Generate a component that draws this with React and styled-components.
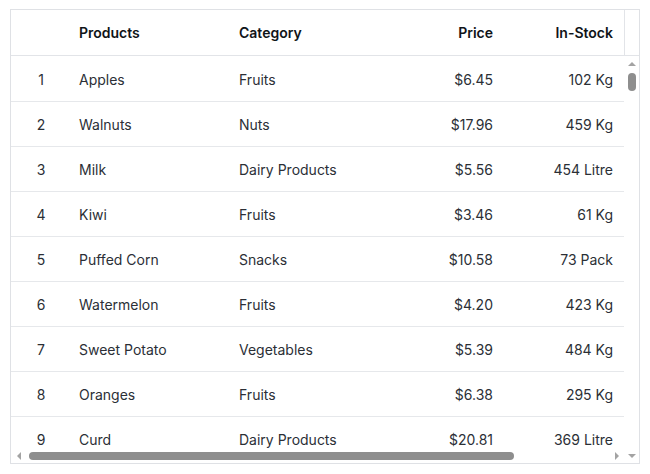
import React from 'react';
import styled, { createGlobalStyle } from 'styled-components';

const GlobalStyle = createGlobalStyle`
    * {
        box-sizing: border-box;
    }
    body {
        margin: 0;
        padding: 9px 10px;
        background: #ffffff;
        font-family: Inter, "Noto Sans", sans-serif;
    }
`;

// column layout shared by header and rows
const columns = [
    { key: 'id', title: '', width: 60, align: 'center' },
    { key: 'name', title: 'Products', width: 160, align: 'left' },
    { key: 'category', title: 'Category', width: 160, align: 'left' },
    { key: 'price', title: 'Price', width: 110, align: 'right' },
    { key: 'stock', title: 'In-Stock', width: 120, align: 'right' },
];

const products = [
    { id: 1, name: 'Apples', category: 'Fruits', price: '$6.45', stock: '102 Kg' },
    { id: 2, name: 'Walnuts', category: 'Nuts', price: '$17.96', stock: '459 Kg' },
    { id: 3, name: 'Milk', category: 'Dairy Products', price: '$5.56', stock: '454 Litre' },
    { id: 4, name: 'Kiwi', category: 'Fruits', price: '$3.46', stock: '61 Kg' },
    { id: 5, name: 'Puffed Corn', category: 'Snacks', price: '$10.58', stock: '73 Pack' },
    { id: 6, name: 'Watermelon', category: 'Fruits', price: '$4.20', stock: '423 Kg' },
    { id: 7, name: 'Sweet Potato', category: 'Vegetables', price: '$5.39', stock: '484 Kg' },
    { id: 8, name: 'Oranges', category: 'Fruits', price: '$6.38', stock: '295 Kg' },
    { id: 9, name: 'Curd', category: 'Dairy Products', price: '$20.81', stock: '369 Litre' },
];

// small triangles drawn like the browser's scrollbar buttons
const arrowPoints = {
    up: '0,4 4,0 8,4',
    down: '0,0 8,0 4,4',
    left: '4,0 4,8 0,4',
    right: '0,0 0,8 4,4',
};

const Arrow = ({ dir }) => {
    const vertical = dir === 'up' || dir === 'down';
    return (
        <ArrowBox vertical={vertical}>
            <svg width={vertical ? 8 : 4} height={vertical ? 4 : 8}>
                <polygon points={arrowPoints[dir]} fill="#a3a3a3" />
            </svg>
        </ArrowBox>
    );
};

const ScrollBar = ({ vertical, thumb }) => (
    <Bar vertical={vertical}>
        <Arrow dir={vertical ? 'up' : 'left'} />
        <Track vertical={vertical}>
            <Thumb vertical={vertical} size={thumb} />
        </Track>
        <Arrow dir={vertical ? 'down' : 'right'} />
    </Bar>
);

const App = () => {
    return (
        <>
            <GlobalStyle />
            <Grid>
                <HeaderRow>
                    <HeaderCells>
                        {columns.map((col) => (
                            <HeaderCell key={col.key} width={col.width} align={col.align}>
                                {col.title}
                            </HeaderCell>
                        ))}
                    </HeaderCells>
                    <HeaderFiller />
                </HeaderRow>
                <Body>
                    <Main>
                        <RowsViewport>
                            {products.map((p) => (
                                <Row key={p.id}>
                                    {columns.map((col) => (
                                        <Cell key={col.key} width={col.width} align={col.align}>
                                            {p[col.key]}
                                        </Cell>
                                    ))}
                                </Row>
                            ))}
                        </RowsViewport>
                        <ScrollBar thumb={485} />
                    </Main>
                    <ScrollBar vertical thumb={18} />
                </Body>
            </Grid>
        </>
    );
};

export default App;

const Grid = styled.div`
    width: 630px;
    height: 455px;
    border: 1px solid #dfe1e5;
    display: flex;
    flex-direction: column;
    background: #fff;
    overflow: hidden;
`;

const HeaderRow = styled.div`
    display: flex;
    height: 46px;
    flex: none;
    border-bottom: 1px solid #e2e4e8;
`;

const HeaderCells = styled.div`
    display: flex;
    width: 613px;
    overflow: hidden;
`;

const HeaderCell = styled.div`
    flex: none;
    width: ${(p) => p.width}px;
    padding: 0 8px;
    display: flex;
    align-items: center;
    justify-content: ${(p) =>
        p.align === 'right' ? 'flex-end' : p.align === 'center' ? 'center' : 'flex-start'};
    font-size: 14px;
    font-weight: 600;
    color: #101418;
    white-space: nowrap;
`;

const HeaderFiller = styled.div`
    width: 15px;
    flex: none;
    border-left: 1px solid #e2e4e8;
`;

const Body = styled.div`
    flex: 1;
    display: flex;
    min-height: 0;
`;

const Main = styled.div`
    width: 613px;
    display: flex;
    flex-direction: column;
`;

const RowsViewport = styled.div`
    flex: 1;
    overflow: hidden;
    padding-top: 1px;
`;

const Row = styled.div`
    display: flex;
    height: 45px;
    border-bottom: 1px solid #e6e8eb;
`;

const Cell = styled.div`
    flex: none;
    width: ${(p) => p.width}px;
    padding: 0 8px;
    display: flex;
    align-items: center;
    justify-content: ${(p) =>
        p.align === 'right' ? 'flex-end' : p.align === 'center' ? 'center' : 'flex-start'};
    font-size: 14px;
    color: #2b2f36;
    white-space: nowrap;
`;

const Bar = styled.div`
    flex: none;
    display: flex;
    flex-direction: ${(p) => (p.vertical ? 'column' : 'row')};
    width: ${(p) => (p.vertical ? '15px' : 'auto')};
    height: ${(p) => (p.vertical ? 'auto' : '15px')};
    background: #fff;
`;

const ArrowBox = styled.div`
    flex: none;
    width: 15px;
    height: 15px;
    display: flex;
    align-items: center;
    justify-content: center;

    svg {
        display: block;
    }
`;

const Track = styled.div`
    flex: 1;
    display: flex;
    flex-direction: ${(p) => (p.vertical ? 'column' : 'row')};
    align-items: center;
    padding: ${(p) => (p.vertical ? '2px 0' : '0 3px')};
`;

const Thumb = styled.div`
    flex: none;
    width: ${(p) => (p.vertical ? '8px' : `${p.size}px`)};
    height: ${(p) => (p.vertical ? `${p.size}px` : '8px')};
    border-radius: 4px;
    background: #8e8e8e;
`;
